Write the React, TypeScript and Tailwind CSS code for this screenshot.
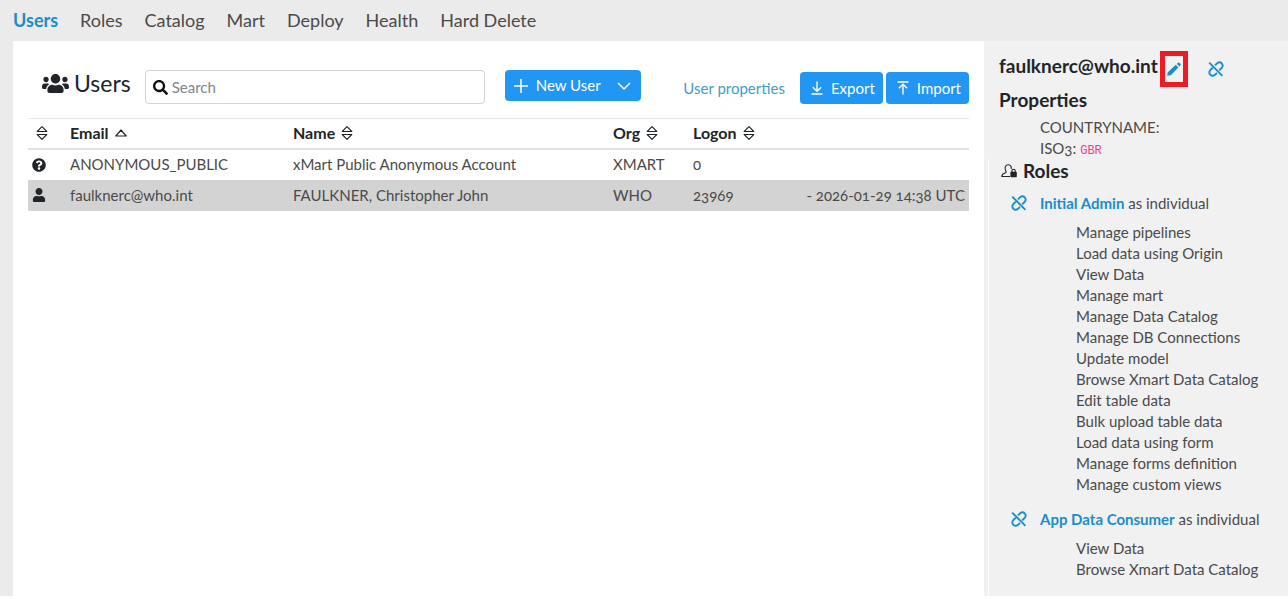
import { useState } from "react";
import { FaQuestionCircle, FaSearch, FaUser, FaUsers } from "react-icons/fa";

const tabs = ["Users", "Roles", "Catalog", "Mart", "Deploy", "Health", "Hard Delete"];

const users = [
  { id: 1, icon: FaQuestionCircle, email: "ANONYMOUS_PUBLIC", name: "xMart Public Anonymous Account", org: "XMART", logons: "0", last: "" },
  { id: 2, icon: FaUser, email: "faulknerc@who.int", name: "FAULKNER, Christopher John", org: "WHO", logons: "23969", last: "- 2026-01-29 14:38 UTC" },
];

const roles = [
  {
    name: "Initial Admin",
    permissions: [
      "Manage pipelines",
      "Load data using Origin",
      "View Data",
      "Manage mart",
      "Manage Data Catalog",
      "Manage DB Connections",
      "Update model",
      "Browse Xmart Data Catalog",
      "Edit table data",
      "Bulk upload table data",
      "Load data using form",
      "Manage forms definition",
      "Manage custom views",
    ],
  },
  { name: "App Data Consumer", permissions: ["View Data", "Browse Xmart Data Catalog"] },
];

const SortIcon = () => (
  <svg className="h-3.5 w-3 shrink-0" viewBox="0 0 12 14" fill="none" stroke="currentColor" strokeWidth="1.1" strokeLinejoin="round">
    <path d="M6 0.7 L10.8 5.5 H1.2 Z" />
    <path d="M1.2 8.5 H10.8 L6 13.3 Z" />
  </svg>
);

const SortUpIcon = () => (
  <svg className="h-2 w-3 shrink-0" viewBox="0 0 12 8" fill="none" stroke="currentColor" strokeWidth="1.2" strokeLinejoin="round">
    <path d="M6 1 L11.2 7 H0.8 Z" />
  </svg>
);

const UnlinkIcon = () => (
  <svg className="block size-4" viewBox="0 0 16 16" fill="none" stroke="currentColor" strokeWidth="1.9">
    <path d="M1.2 1.6 L14.4 14.8" />
    <path d="M7 4.4 L9 2.4 A3.2 3.2 0 0 1 13.6 2.2 A3.2 3.2 0 0 1 13.6 7 L11.2 9.4" />
    <path d="M9 12 L7.2 13.6 A3.2 3.2 0 0 1 2.4 13.8 A3.2 3.2 0 0 1 2.4 9 L4.8 6.6" />
  </svg>
);

const UserLockIcon = () => (
  <svg className="size-4" viewBox="0 0 16 16" fill="none" stroke="currentColor" strokeWidth="1.1">
    <path d="M9 13.5 H0.8 C0.8 10.8 2.5 10.6 4.6 9.8 C5.6 9.3 5 8.4 4.5 7.4 C3.4 4.4 4.6 1.8 7.2 1.8 C9.6 1.8 10.7 3.8 10.2 6" />
    <rect x="9.4" y="8.8" width="6.4" height="5.4" rx="0.6" fill="currentColor" stroke="none" />
    <path d="M11 9 V7.8 A1.6 1.6 0 0 1 14.2 7.8 V9" />
  </svg>
);

const App = () => {
  const [search, setSearch] = useState("");
  const [selected, setSelected] = useState(2);

  return (
    <div className="min-h-screen bg-white pb-1 font-['Lato',sans-serif] text-[15px] oldstyle-nums text-[#4a4a4a]">
      <div className="bg-[#ebebeb]">
        <nav className="flex h-[41px] items-center gap-[22px] pb-0.5 pl-[13px] text-lg">
          {tabs.map((tab) => (
            <a key={tab} href="#" className={tab === "Users" ? "font-bold text-[#1a8dcb]" : ""}>
              {tab}
            </a>
          ))}
        </nav>

        <div className="flex pl-[13px]">
          <main className="min-w-0 flex-1 bg-white pl-[15px] pr-[15px] pt-7">
            {/* Toolbar */}
            <div className="flex h-[49px] items-start">
              <h1 className="ml-3.5 flex items-center gap-[5px] text-[23px] leading-7 text-[#212529]">
                <FaUsers className="size-[27px]" />
                Users
              </h1>
              <label className="ml-3.5 mt-px flex h-[34px] w-[340px] items-center gap-1 rounded-sm border border-[#ced4da] px-[7px]">
                <FaSearch className="size-[15px] text-[#111]" />
                <input
                  type="search"
                  aria-label="Search"
                  placeholder="Search"
                  value={search}
                  onChange={(e) => setSearch(e.target.value)}
                  className="min-w-0 flex-1 outline-none placeholder:text-[#7f858b]"
                />
              </label>
              <div className="ml-5 mt-px flex h-[31px] rounded-sm bg-[#2196f3] text-white">
                <button type="button" className="flex items-center gap-[7px] pl-2">
                  <svg className="size-4" viewBox="0 0 16 16" stroke="currentColor" strokeWidth="1.5">
                    <path d="M8 1 V15 M1 8 H15" />
                  </svg>
                  New User
                </button>
                <button type="button" aria-label="More options" className="pl-4 pr-2.5">
                  <svg className="size-3.5" viewBox="0 0 14 14" fill="none" stroke="currentColor" strokeWidth="1.5">
                    <path d="M1 4 L7 10 L13 4" />
                  </svg>
                </button>
              </div>
              <div className="ml-auto mt-[3px] flex h-8 items-center gap-[3px]">
                <a href="#" className="mr-3 text-[#3d9bd0]">User properties</a>
                <button type="button" className="flex h-8 items-center gap-[7px] rounded-sm bg-[#2196f3] pl-2.5 pr-2 text-white">
                  <svg className="size-3.5" viewBox="0 0 14 14" fill="none" stroke="currentColor" strokeWidth="1.4">
                    <path d="M7 0.5 V10 M2.8 6.3 L7 10.3 L11.2 6.3 M1.5 13 H12.5" />
                  </svg>
                  Export
                </button>
                <button type="button" className="flex h-8 items-center gap-[7px] rounded-sm bg-[#2196f3] pl-2.5 pr-2 text-white">
                  <svg className="size-3.5" viewBox="0 0 14 14" fill="none" stroke="currentColor" strokeWidth="1.4">
                    <path d="M7 13.5 V3.5 M2.8 7.2 L7 3.2 L11.2 7.2 M1.5 1 H12.5" />
                  </svg>
                  Import
                </button>
              </div>
            </div>

            <table className="w-full table-fixed text-left">
              <thead className="border-b-2 border-t border-[#dee2e6] border-t-[#e4e8eb] text-base text-[#212529]">
                <tr className="h-[30px]">
                  <th className="w-[42px] pl-2"><SortIcon /></th>
                  <th className="w-[223px]"><span className="flex items-center gap-1.5">Email <SortUpIcon /></span></th>
                  <th className="w-[320px]"><span className="flex items-center gap-1.5">Name <SortIcon /></span></th>
                  <th className="w-20"><span className="flex items-center gap-1.5">Org <SortIcon /></span></th>
                  <th><span className="flex items-center gap-1.5">Logon <SortIcon /></span></th>
                </tr>
              </thead>
              <tbody>
                {users.map((user) => (
                  <tr
                    key={user.id}
                    onClick={() => setSelected(user.id)}
                    className={`h-[31px] cursor-pointer ${selected === user.id ? "bg-[#d3d3d3]" : ""}`}
                  >
                    <td className="pl-1"><user.icon className="size-3.5 text-[#212529]" /></td>
                    <td>{user.email}</td>
                    <td>{user.name}</td>
                    <td>{user.org}</td>
                    <td>
                      <div className="flex justify-between pr-1">
                        <span>{user.logons}</span>
                        <span>{user.last}</span>
                      </div>
                    </td>
                  </tr>
                ))}
              </tbody>
            </table>
          </main>

          {/* Details of the selected user */}
          <aside className="w-[304px] shrink-0 bg-[#f1f1f1] pl-1 pt-2.5">
            <div className="pl-[11px]">
              <div className="flex h-9 items-center text-[#212529]">
                <h2 className="self-start text-[19px] leading-[30px] font-bold">faulknerc@who.int</h2>
                <button type="button" aria-label="Edit user" className="ml-0.5 flex h-9 w-7 items-center justify-center border-[5px] border-[#ed1c24] text-[#1a8dcb]">
                  <svg className="size-4 shrink-0" viewBox="0 0 16 16" fill="currentColor">
                    <path d="M1.2 14.8 L1.8 11.2 L9.8 3.8 L12.4 6.4 L4.8 14.2 Z M10.8 2.9 L12 1.8 Q12.8 1.2 13.5 1.9 L14.5 2.9 Q15.1 3.6 14.5 4.3 L13.4 5.5 Z" />
                  </svg>
                </button>
                <button type="button" aria-label="Unlink user" className="ml-5 text-[#1a8dcb]"><UnlinkIcon /></button>
              </div>
              <h2 className="text-[19px] leading-[26px] font-bold text-[#212529]">Properties</h2>
              <dl className="pl-[41px] pt-1 leading-[21px]">
                <dt>COUNTRYNAME:</dt>
                <div className="flex h-[21px] items-baseline gap-1">
                  <dt>ISO3:</dt>
                  <dd className="font-['Liberation_Mono',monospace] text-xs text-[#e83e8c]">GBR</dd>
                </div>
              </dl>
            </div>
            <div className="border-l border-white pb-3 pl-2.5">
              <h2 className="flex items-center gap-1.5 pl-0.5 text-[19px] leading-6 font-bold text-[#212529]">
                <UserLockIcon />
                Roles
              </h2>
              {roles.map((role) => (
                <section key={role.name} className="pt-2">
                  <div className="flex h-6 items-center">
                    <button type="button" aria-label="Remove role" className="ml-3 mr-[13px] text-[#1a8dcb]"><UnlinkIcon /></button>
                    <p><a href="#" className="font-bold text-[#1a8dcb]">{role.name}</a> as individual</p>
                  </div>
                  <ul className="pb-1 pl-[77px] pt-[7px] leading-[21px]">
                    {role.permissions.map((p) => (
                      <li key={p}>{p}</li>
                    ))}
                  </ul>
                </section>
              ))}
            </div>
          </aside>
        </div>
      </div>
    </div>
  );
};

export default App;
